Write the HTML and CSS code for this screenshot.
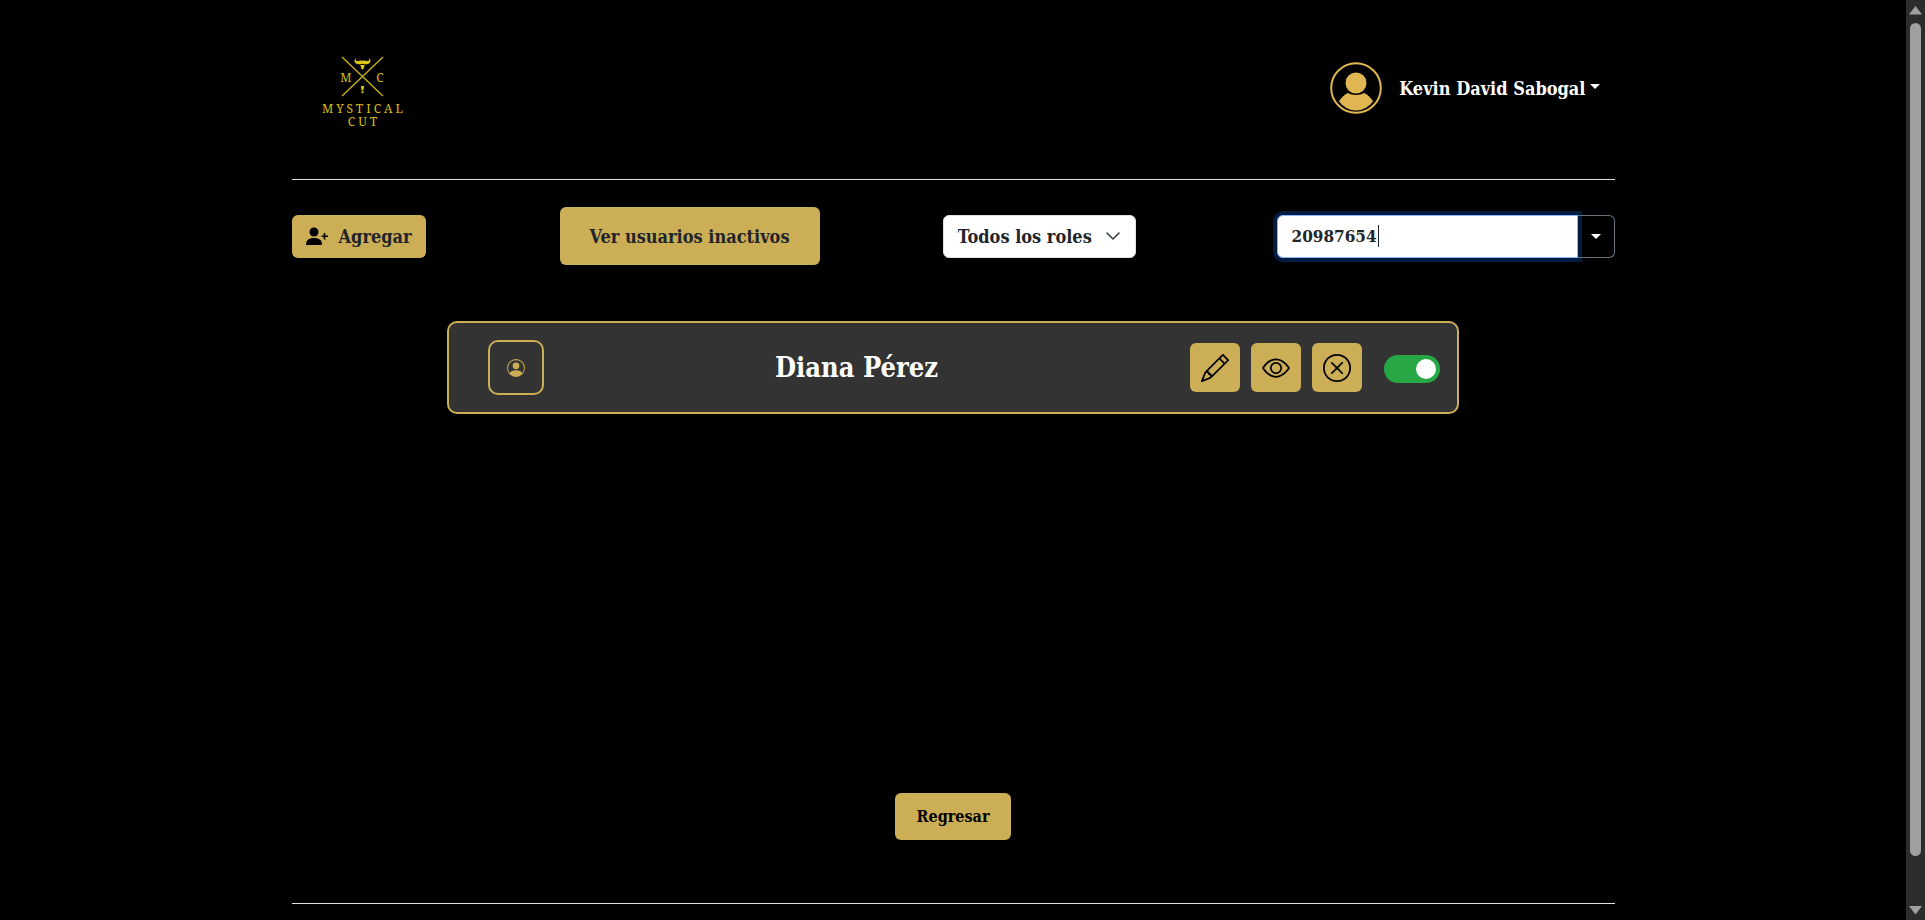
FILE: index.html
```html
<!DOCTYPE html>
<html lang="es">
<head>
<meta charset="utf-8">
<title>Mystical Cut</title>
<link rel="stylesheet" href="styles.css">
</head>
<body>
<svg class="defs" aria-hidden="true">
  <symbol id="person" viewBox="0 0 16 16">
    <path d="M11 6a3 3 0 1 1-6 0 3 3 0 0 1 6 0"/>
    <path fill-rule="evenodd" d="M0 8a8 8 0 1 1 16 0A8 8 0 0 1 0 8m8-7a7 7 0 0 0-5.468 11.37C3.242 11.226 4.805 10 8 10s4.757 1.225 5.468 2.37A7 7 0 0 0 8 1"/>
  </symbol>
</svg>
<div class="page">
  <div class="container">
    <header class="header">
      <a class="logo" href="#" aria-label="Mystical Cut">
        <svg width="90" height="76" viewBox="0 0 90 76">
          <g stroke="#cdb414" stroke-width="1.3"><path d="M25 4L66 43M66 4L25 43"/></g>
          <g fill="#e0c615">
            <path d="M40 5.500C38 6 38.500 8 40.500 8C42.500 8 43.500 6.800 45.500 7.800C47.500 6.800 48.500 8 50.500 8C52.500 8 53 6 51 5.500C54 5 54.500 9.500 51.500 10.700C49.500 11.500 47 11.300 45.500 10.700C44 11.300 41.500 11.500 39.500 10.700C36.500 9.500 37 5 40 5.500Z"/>
            <path d="M43.300 12h4.400l-1 3.500-1.200 1.200-1.200-1.200z"/>
            <path d="M43.800 33h3.400l-.9 4.500h-1.600zM44.500 38.300h2v2h-2z"/>
          </g>
          <g class="logo-text" text-anchor="middle">
            <text x="29" y="29">M</text><text x="63" y="29">C</text>
            <text class="tracked" x="47" y="60">MYSTICAL</text>
            <text class="tracked" x="47" y="73">CUT</text>
          </g>
        </svg>
      </a>
      <button class="user-menu" type="button">
        <svg class="user-avatar" viewBox="0 0 52 52" aria-hidden="true">
          <circle cx="26" cy="26" r="24.800" fill="none" stroke="#e0b652" stroke-width="2"/>
          <circle cx="26" cy="21" r="10.500" fill="#e0b652"/>
          <path fill="#e0b652" d="M17.500 31Q26 35 34.500 31Q40 34 43 39.500Q36 48.500 26 48.500Q16 48.500 9 39.500Q12 34 17.500 31Z"/>
        </svg>
        <span class="user-label">Kevin David Sabogal<span class="caret"></span></span>
      </button>
    </header>
    <div class="toolbar">
      <div class="cell"><button class="btn btn-add" type="button">
        <svg width="24" height="24" viewBox="0 0 24 24" aria-hidden="true"><circle cx="9" cy="8" r="4.500"/><path d="M1 21C1 16.500 3.500 14 9 14S17 16.500 17 20Q17 21 16 21Z"/><path d="M19.500 9v6.500M16.500 12.200h6.500" stroke="#000" stroke-width="1.600"/></svg>
        Agregar</button></div>
      <div class="cell"><button class="btn btn-inactive" type="button">Ver usuarios inactivos</button></div>
      <div class="cell"><select class="roles" aria-label="Filtrar por rol"><option>Todos los roles</option></select></div>
      <div class="search">
        <div class="search-field">
          <input class="search-input" type="text" value="20987654" aria-label="Buscar usuario">
          <span class="text-cursor"></span>
        </div>
        <button class="search-toggle" type="button" aria-label="Opciones de búsqueda"><span class="caret"></span></button>
      </div>
    </div>
    <main class="users">
      <article class="card">
        <div class="card-avatar"><svg width="18" height="18"><use href="#person"/></svg></div>
        <h2 class="card-name">Diana Pérez</h2>
        <div class="actions">
          <button class="icon-btn" type="button" aria-label="Editar"><svg width="28" height="28" viewBox="0 0 16 16"><path d="M12.146.146a.5.5 0 0 1 .708 0l3 3a.5.5 0 0 1 0 .708l-10 10a.5.5 0 0 1-.168.11l-5 2a.5.5 0 0 1-.65-.65l2-5a.5.5 0 0 1 .11-.168zM11.207 2.500 13.500 4.793 14.793 3.500 12.500 1.207zm1.586 3L10.500 3.207 4 9.707V10h.5a.5.5 0 0 1 .5.5v.5h.5a.5.5 0 0 1 .5.5v.5h.293zm-9.761 5.175-.106.106-1.528 3.821 3.821-1.528.106-.106A.5.5 0 0 1 5 12.500V12h-.5a.5.5 0 0 1-.5-.5V11h-.5a.5.5 0 0 1-.468-.325"/></svg></button>
          <button class="icon-btn" type="button" aria-label="Ver"><svg width="28" height="28" viewBox="0 0 16 16"><path d="M16 8s-3-5.500-8-5.500S0 8 0 8s3 5.500 8 5.500S16 8 16 8M1.173 8a13 13 0 0 1 1.660-2.043C4.120 4.668 5.880 3.500 8 3.500s3.879 1.168 5.168 2.457A13 13 0 0 1 14.828 8q-.086.130-.195.288c-.335.480-.830 1.120-1.465 1.755C11.879 11.332 10.119 12.500 8 12.500s-3.879-1.168-5.168-2.457A13 13 0 0 1 1.172 8z"/><path d="M8 5.500a2.500 2.500 0 1 0 0 5 2.500 2.500 0 0 0 0-5M4.500 8a3.500 3.500 0 1 1 7 0 3.500 3.500 0 0 1-7 0"/></svg></button>
          <button class="icon-btn" type="button" aria-label="Eliminar"><svg width="28" height="28" viewBox="0 0 16 16"><path d="M8 15A7 7 0 1 1 8 1a7 7 0 0 1 0 14m0 1A8 8 0 1 0 8 0a8 8 0 0 0 0 16"/><path d="M4.646 4.646a.5.5 0 0 1 .708 0L8 7.293l2.646-2.647a.5.5 0 0 1 .708.708L8.707 8l2.647 2.646a.5.5 0 0 1-.708.708L8 8.707l-2.646 2.647a.5.5 0 0 1-.708-.708L7.293 8 4.646 5.354a.5.5 0 0 1 0-.708"/></svg></button>
          <input class="switch" type="checkbox" checked aria-label="Usuario activo">
        </div>
      </article>
    </main>
    <footer class="footer"><button class="btn btn-back" type="button">Regresar</button></footer>
  </div>
  <div class="scrollbar" aria-hidden="true">
    <svg width="13" height="9" viewBox="0 0 13 9"><path d="M6.500 0L13 8.500H0z" fill="#9f9f9f"/></svg>
    <div class="scroll-thumb"></div>
    <svg width="13" height="9" viewBox="0 0 13 9"><path d="M0 0H13L6.500 8.500z" fill="#9f9f9f"/></svg>
  </div>
</div>
</body>
</html>
```
FILE: styles.css
```css
* { box-sizing: border-box; }
body {
  margin: 0;
  background: #000;
  color: #fff;
  font-family: "DejaVu Serif Condensed", "DejaVu Serif", serif;
  font-weight: 700;
  font-size: 18px;
}
button, input, select { font: inherit; }
.defs { display: none; }
.page { display: flex; height: 100vh; overflow: hidden; }
.container { width: 100%; max-width: 1323px; margin: 0 auto; }
.header {
  display: flex;
  justify-content: space-between;
  align-items: flex-start;
  height: 180px;
  padding: 53px 15px 0 25px;
  border-bottom: 1px solid #dee2e6;
}
.logo-text { fill: #d8be14; font: 400 12px "Noto Serif", "Liberation Serif", serif; }
.tracked { letter-spacing: 3px; }
.user-menu {
  display: flex;
  align-items: center;
  gap: 17px;
  margin-top: 9px;
  padding: 0;
  border: 0;
  background: none;
  color: #fff;
}
.user-avatar { width: 52px; height: 52px; }
.user-label { display: flex; align-items: center; gap: 4px; }
.caret {
  border: 5px solid transparent;
  border-top-color: #fff;
  border-bottom: 0;
}
.user-label .caret { margin-bottom: 4px; }
.toolbar {
  display: grid;
  grid-template-columns: 268fr 383fr 334fr 338fr;
  align-items: center;
  margin-top: 27px;
}
.cell { display: flex; }
.btn {
  border: 0;
  border-radius: 6px;
  background: #cbae56;
  color: #212529;
}
.btn-add { display: flex; align-items: center; gap: 10px; height: 43px; padding: 0 14px 0 13px; }
.btn-add svg { fill: #000; }
.btn-inactive { height: 58px; padding: 0 30px; }
.roles {
  appearance: none;
  width: 193px;
  height: 43px;
  padding: 0 14px;
  border: 1px solid #dee2e6;
  border-radius: 6px;
  color: #212529;
  background: #fff url("data:image/svg+xml,%3Csvg xmlns='http://www.w3.org/2000/svg' viewBox='0 0 16 16'%3E%3Cpath fill='none' stroke='%23343a40' stroke-linecap='round' stroke-linejoin='round' stroke-width='1.500' d='m2 5 6 6 6-6'/%3E%3C/svg%3E") no-repeat right 14px center / 16px 16px;
}
.search { display: flex; height: 43px; }
.search-field { position: relative; flex: 1; z-index: 1; }
.search-input {
  width: 100%;
  height: 43px;
  padding: 0 14px;
  border: 1px solid #86b7fe;
  border-radius: 6px 0 0 6px;
  outline: 0;
  background: #fff;
  color: #212529;
  font-size: 17px;
  box-shadow: 0 0 0 4px rgba(13, 110, 253, .25);
}
.text-cursor { position: absolute; left: 101px; top: 10px; width: 1px; height: 22px; background: #212529; }
.search-toggle {
  display: flex;
  align-items: center;
  justify-content: center;
  width: 37px;
  padding: 0;
  border: 1px solid #6c757d;
  border-left: 0;
  border-radius: 0 6px 6px 0;
  background: #000;
}
.users { min-height: 472px; padding-top: 56px; }
.card {
  display: flex;
  align-items: center;
  justify-content: space-between;
  max-width: 1012px;
  height: 93px;
  margin: 0 auto;
  padding: 0 17px 0 39px;
  border: 2px solid #cbae56;
  border-radius: 10px;
  background: #333;
}
.card-avatar {
  display: grid;
  place-items: center;
  width: 56px;
  height: 55px;
  border: 2px solid #cbae56;
  border-radius: 10px;
  color: #cbae56;
}
.card-avatar svg { fill: currentColor; }
.card-name { flex: 1; margin: 0; padding-right: 21px; text-align: center; font-size: 27px; }
.actions { display: flex; align-items: center; gap: 11px; }
.icon-btn {
  display: grid;
  place-items: center;
  width: 50px;
  height: 49px;
  padding: 0;
  border: 0;
  border-radius: 6px;
  background: #cbae56;
}
.switch {
  appearance: none;
  display: flex;
  align-items: center;
  justify-content: flex-end;
  width: 56px;
  height: 28px;
  margin: 2px 0 0 11px;
  padding: 4px;
  border-radius: 14px;
  background: #28a745;
}
.switch::before { content: ""; width: 20px; height: 20px; border-radius: 50%; background: #fff; }
.footer {
  display: flex;
  justify-content: center;
  padding: 56px 0 63px;
  border-bottom: 1px solid #dee2e6;
}
.btn-back { height: 47px; padding: 0 22px; color: #000; font-size: 16px; }
.scrollbar {
  display: flex;
  flex-direction: column;
  align-items: center;
  gap: 8px;
  width: 19px;
  padding: 6px 0 5px;
  background: #2c2c2c;
}
.scroll-thumb { flex: 1; width: 11px; margin-bottom: 42px; border-radius: 6px; background: #9f9f9f; }
```
